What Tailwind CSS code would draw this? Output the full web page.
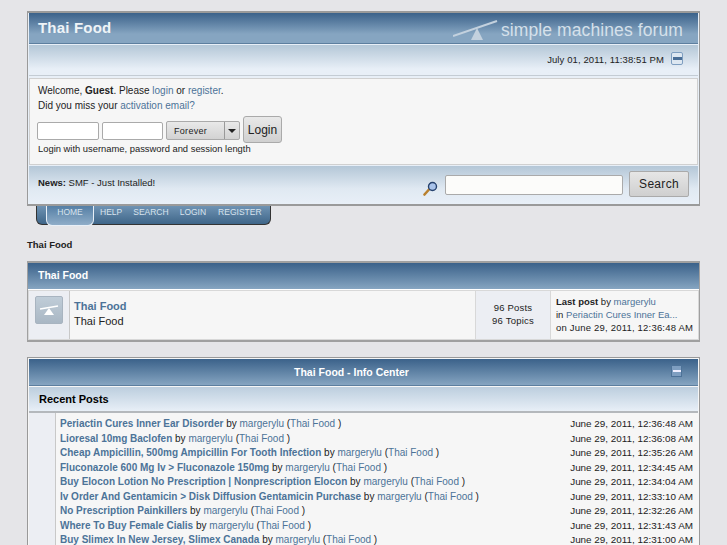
<!DOCTYPE html>
<html lang="en">
<head>
  <meta charset="UTF-8">
  <title>Thai Food</title>
  <script src="https://cdn.jsdelivr.net/npm/@tailwindcss/browser@4"></script>
</head>
<body class="bg-[#e5e5e8] h-[545px] overflow-hidden font-['Liberation_Sans',Arial,sans-serif] text-[#222] text-[11px]">
  <div class="w-[673px] ml-[27px] pt-[11px]">

    <!-- top box -->
    <div class="border border-[#9a9a9a] border-b-2 border-t-2 p-[1px] pt-0 pb-0 bg-[#e8eff7] h-[195px] flex flex-col">
      <div class="h-[31px] flex justify-between bg-gradient-to-b from-[#3b628a] to-[#86a5c1] to-70% border-b border-[#5d7f9f]">
        <div class="pl-[9px] pt-[5px] text-[#eef3f7] text-[15px] font-bold leading-[20px] tracking-[0.2px]">Thai Food</div>
        <div class="flex items-center pr-[15px] pt-[3px] gap-[2px] text-[#d5e0ea]">
          <svg width="46" height="22" viewBox="0 0 46 22"><path d="M0 17 L44 2" stroke="#c3d1de" stroke-width="2"/><path d="M18 21 L24 9 L30 21 Z" fill="#c3d1de"/></svg>
          <span class="text-[17.5px] leading-[20px] tracking-[0.1px]">simple machines forum</span>
        </div>
      </div>
      <div class="h-[31px] mt-[1px] flex justify-end items-center gap-[7px] pr-[15px] bg-gradient-to-b from-[#b4c7d7] to-[#e8eff7] to-80% border-b border-[#c4ccd4]">
        <span class="text-[9.5px] tracking-[0.1px] text-[#222]">July 01, 2011, 11:38:51 PM</span>
        <span class="w-[12px] h-[13px] rounded-[2px] border border-[#7e9ec0] bg-[#dde7f1] flex items-center justify-center mb-[3px]"><span class="w-[9px] h-[3px] bg-[#4a6e96]"></span></span>
      </div>
      <div class="h-[87px] mt-[2px] bg-[#f6f6f6] border border-[#d0d0d0] pl-[8px] pt-[4px]">
        <p class="leading-[15px] text-[10px]">Welcome, <b>Guest</b>. Please <a class="text-[#4c7398]">login</a> or <a class="text-[#4c7398]">register</a>.</p>
        <p class="leading-[15px] text-[10px]">Did you miss your <a class="text-[#4c7398]">activation email?</a></p>
        <div class="flex items-start mt-[3px] -ml-[1px]">
          <input class="w-[62px] h-[18px] mt-[6px] bg-white border border-[#aaa] rounded-[2px]">
          <input class="w-[61px] h-[18px] mt-[6px] ml-[3px] bg-white border border-[#aaa] rounded-[2px]">
          <div class="w-[74px] h-[19px] mt-[5px] ml-[3px] flex border border-[#aaa] rounded-[2px] bg-gradient-to-b from-[#e9e9e9] to-[#d2d2d2]">
            <span class="flex-1 pl-[7px] text-[9px] leading-[18px] tracking-[0.3px]">Forever</span>
            <span class="w-[15px] border-l border-[#999] flex items-center justify-center"><span class="border-x-[4px] border-x-transparent border-t-[4px] border-t-[#222]"></span></span>
          </div>
          <button class="w-[39px] h-[27px] ml-[3px] border border-[#aaa] rounded-[3px] bg-gradient-to-b from-[#e9e9e9] to-[#d0d0d0] text-[12px]">Login</button>
        </div>
        <p class="text-[9.4px] leading-[12px] mt-[0px]">Login with username, password and session length</p>
      </div>
      <div class="flex-1 mt-[1px] flex justify-between bg-gradient-to-b from-[#b4c7d7] via-[#e0e9f2] via-60% to-[#e8eff7]">
        <p class="pl-[9px] pt-[11px] text-[9.5px] leading-[12px]"><b>News:</b> SMF - Just Installed!</p>
        <div class="flex pr-[9px] pt-[5px] items-start">
          <svg class="mt-[10px]" width="15" height="15" viewBox="0 0 15 15"><path d="M1.5 13.5 L6 8.5" stroke="#b9802e" stroke-width="2.6" stroke-linecap="round"/><circle cx="9.5" cy="5.5" r="4" fill="#a9c3ea" stroke="#26426e" stroke-width="1.4"/></svg>
          <input class="w-[178px] h-[20px] mt-[4px] ml-[7px] bg-[#fcfcfa] border border-[#aaa] rounded-[2px]">
          <button class="w-[60px] h-[26px] ml-[6px] border border-[#aaa] rounded-[2px] bg-gradient-to-b from-[#e6e6e6] to-[#cfcfcf] text-[12px] tracking-[0.3px]">Search</button>
        </div>
      </div>
    </div>

    <!-- menu tabs -->
    <div class="ml-[9px] w-[235px] h-[19px] flex text-[8.5px] text-[#d8e4ee] bg-gradient-to-b from-[#6f93b3] to-[#3f6689] border border-t-0 border-[#333] rounded-b-[6px]">
      <span class="ml-[9px] w-[48px] h-[20px] text-center leading-[13px] border border-t-0 border-[#e8eff7] rounded-b-[6px] bg-gradient-to-b from-[#557fa5] to-[#8fadc8]">HOME</span>
      <span class="ml-[6px] leading-[13px]">HELP</span>
      <span class="ml-[11px] leading-[13px]">SEARCH</span>
      <span class="ml-[11px] leading-[13px]">LOGIN</span>
      <span class="ml-[12px] leading-[13px]">REGISTER</span>
    </div>

    <p class="mt-[14px] h-[12px] leading-[12px] text-[9.5px] font-bold">Thai Food</p>

    <!-- category -->
    <div class="mt-[10px] border-2 border-[#a0a0a0] border-l border-r h-[81px] bg-white flex flex-col">
      <div class="h-[26px] pl-[10px] leading-[25px] text-white font-bold text-[10.5px] bg-gradient-to-b from-[#3b628a] to-[#86a5c1]">Thai Food</div>
      <div class="flex-1 mt-[1px] flex bg-[#f6f6f6] border border-[#d8d8d8]">
        <div class="w-[41px] bg-[#eceef3] border-r border-[#c8c8c8] pl-[6px] pt-[5px]">
          <div class="w-[28px] h-[28px] rounded-[2px] border border-[#a8b4c0] bg-gradient-to-b from-[#c0cdd8] to-[#a9b7c4] flex items-center justify-center">
            <svg width="20" height="14" viewBox="0 0 20 14"><path d="M1 6 L19 3" stroke="#fff" stroke-width="1.4"/><path d="M5 12 L10 5 L15 12 Z" fill="#fff"/></svg>
          </div>
        </div>
        <div class="flex-1 pl-[4px] pt-[8px] text-[11px] leading-[15px]">
          <a class="block font-bold text-[#4c7398]">Thai Food</a>
          <p>Thai Food</p>
        </div>
        <div class="w-[76px] bg-[#eceef3] border-x border-[#d8d8d8] text-center pt-[10px] text-[9.5px] tracking-[0.2px] leading-[13px]">
          <p>96 Posts</p><p>96 Topics</p>
        </div>
        <div class="w-[147px] pl-[5px] pt-[4px] text-[9.5px] leading-[13px] whitespace-nowrap">
          <p><b>Last post</b> by <a class="text-[#4c7398]">margerylu</a></p>
          <p>in <a class="text-[#4c7398]">Periactin Cures Inner Ea...</a></p>
          <p class="tracking-[0.2px]">on June 29, 2011, 12:36:48 AM</p>
        </div>
      </div>
    </div>

    <!-- info center -->
    <div class="mt-[15px] border border-[#999] border-b-0 h-[200px] p-[1px] pb-0 bg-[#f6f6f6]">
      <div class="h-[27px] relative text-center pr-[24px] leading-[26px] text-white font-bold text-[10.5px] bg-gradient-to-b from-[#3b628a] to-[#86a5c1] border-b border-[#5d7f9f]">
        Thai Food - Info Center
        <span class="absolute right-[16px] top-[6px] w-[11px] h-[12px] bg-[#7e9ec0] border border-[#4d7298] flex items-center justify-center"><span class="w-[8px] h-[2px] bg-[#eef]"></span></span>
      </div>
      <div class="h-[26px] mt-[1px] pl-[10px] leading-[24px] font-bold text-[11px] text-black bg-gradient-to-b from-[#bccede] to-[#e8eff7] border-b-2 border-[#b4b8bc]">Recent Posts</div>
      <div class="flex">
        <div class="w-[27px] bg-[#eceef3] border-r border-[#c8c8c8] h-[150px]"></div>
        <div class="flex-1 pl-[4px] pr-[5px] pt-[4px] text-[10px] leading-[14.5px]">
          <div class="flex justify-between"><p><a class="font-bold text-[#4c7398]">Periactin Cures Inner Ear Disorder</a> by <a class="text-[#4c7398]">margerylu</a> (<a class="text-[#4c7398]">Thai Food</a> )</p><span class="text-[9.9px]">June 29, 2011, 12:36:48 AM</span></div>
          <div class="flex justify-between"><p><a class="font-bold text-[#4c7398]">Lioresal 10mg Baclofen</a> by <a class="text-[#4c7398]">margerylu</a> (<a class="text-[#4c7398]">Thai Food</a> )</p><span class="text-[9.9px]">June 29, 2011, 12:36:08 AM</span></div>
          <div class="flex justify-between"><p><a class="font-bold text-[#4c7398]">Cheap Ampicillin, 500mg Ampicillin For Tooth Infection</a> by <a class="text-[#4c7398]">margerylu</a> (<a class="text-[#4c7398]">Thai Food</a> )</p><span class="text-[9.9px]">June 29, 2011, 12:35:26 AM</span></div>
          <div class="flex justify-between"><p><a class="font-bold text-[#4c7398]">Fluconazole 600 Mg Iv &gt; Fluconazole 150mg</a> by <a class="text-[#4c7398]">margerylu</a> (<a class="text-[#4c7398]">Thai Food</a> )</p><span class="text-[9.9px]">June 29, 2011, 12:34:45 AM</span></div>
          <div class="flex justify-between"><p><a class="font-bold text-[#4c7398]">Buy Elocon Lotion No Prescription | Nonprescription Elocon</a> by <a class="text-[#4c7398]">margerylu</a> (<a class="text-[#4c7398]">Thai Food</a> )</p><span class="text-[9.9px]">June 29, 2011, 12:34:04 AM</span></div>
          <div class="flex justify-between"><p><a class="font-bold text-[#4c7398]">Iv Order And Gentamicin &gt; Disk Diffusion Gentamicin Purchase</a> by <a class="text-[#4c7398]">margerylu</a> (<a class="text-[#4c7398]">Thai Food</a> )</p><span class="text-[9.9px]">June 29, 2011, 12:33:10 AM</span></div>
          <div class="flex justify-between"><p><a class="font-bold text-[#4c7398]">No Prescription Painkillers</a> by <a class="text-[#4c7398]">margerylu</a> (<a class="text-[#4c7398]">Thai Food</a> )</p><span class="text-[9.9px]">June 29, 2011, 12:32:26 AM</span></div>
          <div class="flex justify-between"><p><a class="font-bold text-[#4c7398]">Where To Buy Female Cialis</a> by <a class="text-[#4c7398]">margerylu</a> (<a class="text-[#4c7398]">Thai Food</a> )</p><span class="text-[9.9px]">June 29, 2011, 12:31:43 AM</span></div>
          <div class="flex justify-between"><p><a class="font-bold text-[#4c7398]">Buy Slimex In New Jersey, Slimex Canada</a> by <a class="text-[#4c7398]">margerylu</a> (<a class="text-[#4c7398]">Thai Food</a> )</p><span class="text-[9.9px]">June 29, 2011, 12:31:00 AM</span></div>
        </div>
      </div>
    </div>
  </div>
</body>
</html>
